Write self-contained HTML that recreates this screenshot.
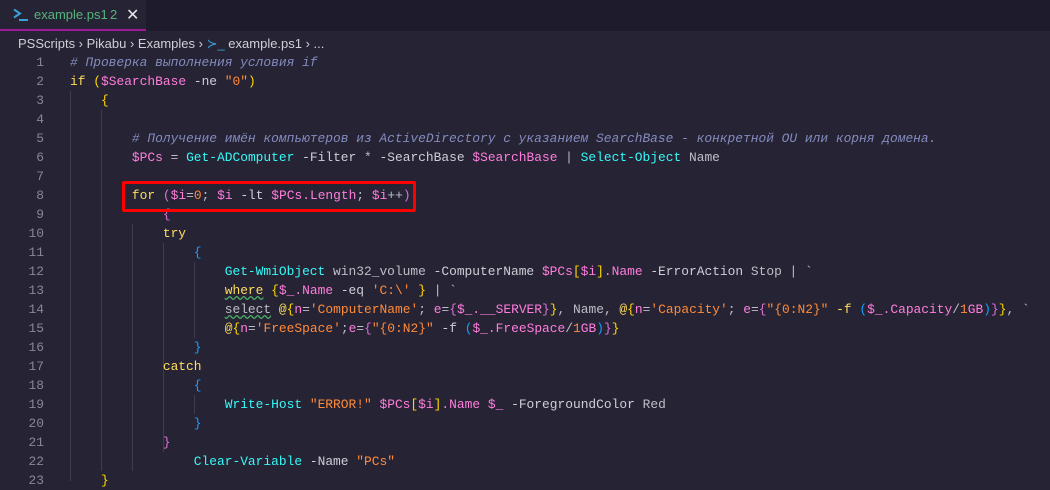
<!DOCTYPE html>
<html><head><meta charset="utf-8"><style>
html,body{margin:0;width:1050px;height:481px;overflow:hidden;background:#262335;font-family:"Liberation Sans",sans-serif}
.tabbar{position:absolute;left:0;top:0;width:1050px;height:31px;background:#1e1b2c}
.tab{position:absolute;left:0;top:0;width:146px;height:29px;background:#262335;border-bottom:2px solid #a0199a}
.tab .t{position:absolute;left:34px;top:7px;font-size:13px;color:#56b47a}
.tab .n{position:absolute;left:110px;top:7px;font-size:13px;color:#56b47a}
.tab .x{position:absolute;left:126px;top:5px;font-size:16px;color:#e6e6e6}
.bc{position:absolute;left:18px;top:36px;font-size:13px;color:#cfcfd6;white-space:pre}
.code{position:absolute;left:0;top:53px;font-family:"Liberation Mono","DejaVu Sans Mono",monospace;font-size:12.9px}
.l{height:19px;line-height:19px;position:relative;white-space:pre;color:#c0bcc6}
.ln{position:absolute;left:0;width:44px;text-align:right;color:#8a8698}
.tx{position:absolute;left:70px}
.c{color:#848bbd;font-style:italic}
.k{color:#fede5d}.v{color:#ff7edb}.s{color:#ff8b39}.f{color:#36f9f6}.p{color:#cfcdd6}
.y{color:#ffd700}.m{color:#da70d6}.b{color:#179fff}
.w{text-decoration:underline wavy #4cae63}
.g{position:absolute;width:1px;background:#3f3c50}
.box{position:absolute;left:122px;top:181px;width:288px;height:25px;border:3px solid #f00;border-radius:2px}
</style></head><body>
<div class="tabbar"><div class="tab">
<svg style="position:absolute;left:13px;top:8px" width="16" height="14" viewBox="0 0 16 14"><path d="M1 1.5 L7 5.5 L1 9.5" stroke="#3aa0d8" stroke-width="2" fill="none"/><path d="M6 12 H15" stroke="#3aa0d8" stroke-width="2"/></svg>
<span class="t">example.ps1</span><span class="n">2</span><span class="x">✕</span></div></div>
<div class="bc">PSScripts › Pikabu › Examples › <span style="color:#3aa0d8">≻_</span> example.ps1 › ...</div>
<div class="g" style="left:70px;top:91px;height:390px"></div>
<div class="g" style="left:101px;top:110px;height:361px"></div>
<div class="g" style="left:132px;top:224px;height:247px"></div>
<div class="g" style="left:163px;top:243px;height:209px"></div>
<div class="g" style="left:194px;top:262px;height:76px"></div>
<div class="g" style="left:194px;top:395px;height:19px"></div>
<div class="code">
<div class="l"><span class="ln">1</span><span class="tx c"># Проверка выполнения условия if</span></div>
<div class="l"><span class="ln">2</span><span class="tx"><span class="k">if</span> <span class="y">(</span><span class="v">$SearchBase</span> <span class="p">-ne</span> <span class="s">"0"</span><span class="y">)</span></span></div>
<div class="l"><span class="ln">3</span><span class="tx">    <span class="y">{</span></span></div>
<div class="l"><span class="ln">4</span></div>
<div class="l"><span class="ln">5</span><span class="tx c">        # Получение имён компьютеров из ActiveDirectory с указанием SearchBase - конкретной OU или корня домена.</span></div>
<div class="l"><span class="ln">6</span><span class="tx">        <span class="v">$PCs</span> = <span class="f">Get-ADComputer</span> <span class="p">-Filter</span> * <span class="p">-SearchBase</span> <span class="v">$SearchBase</span> | <span class="f">Select-Object</span> Name</span></div>
<div class="l"><span class="ln">7</span></div>
<div class="l"><span class="ln">8</span><span class="tx">        <span class="k">for</span> <span class="m">(</span><span class="v">$i</span>=<span class="s">0</span>; <span class="v">$i</span> <span class="p">-lt</span> <span class="v">$PCs.Length</span>; <span class="v">$i</span>++<span class="m">)</span></span></div>
<div class="l"><span class="ln">9</span><span class="tx">            <span class="m">{</span></span></div>
<div class="l"><span class="ln">10</span><span class="tx">            <span class="k">try</span></span></div>
<div class="l"><span class="ln">11</span><span class="tx">                <span class="b">{</span></span></div>
<div class="l"><span class="ln">12</span><span class="tx">                    <span class="f">Get-WmiObject</span> win32_volume <span class="p">-ComputerName</span> <span class="v">$PCs</span><span class="y">[</span><span class="v">$i</span><span class="y">]</span><span class="v">.Name</span> <span class="p">-ErrorAction</span> Stop | `</span></div>
<div class="l"><span class="ln">13</span><span class="tx">                    <span class="k w">where</span> <span class="y">{</span><span class="v">$_.Name</span> <span class="p">-eq</span> <span class="s">'C:\'</span> <span class="y">}</span> | `</span></div>
<div class="l"><span class="ln">14</span><span class="tx">                    <span class="w">select</span> <span class="k">@</span><span class="y">{</span><span class="v">n</span>=<span class="s">'ComputerName'</span>; <span class="v">e</span>=<span class="m">{</span><span class="v">$_.__SERVER</span><span class="m">}</span><span class="y">}</span>, Name, <span class="k">@</span><span class="y">{</span><span class="v">n</span>=<span class="s">'Capacity'</span>; <span class="v">e</span>=<span class="m">{</span><span class="s">"{0:N2}"</span> <span class="k">-f</span> <span class="b">(</span><span class="v">$_.Capacity</span>/<span class="s">1</span><span class="v">GB</span><span class="b">)</span><span class="m">}</span><span class="y">}</span>, `</span></div>
<div class="l"><span class="ln">15</span><span class="tx">                    <span class="k">@</span><span class="y">{</span><span class="v">n</span>=<span class="s">'FreeSpace'</span>;<span class="v">e</span>=<span class="m">{</span><span class="s">"{0:N2}"</span> <span class="p">-f</span> <span class="b">(</span><span class="v">$_.FreeSpace</span>/<span class="s">1</span><span class="v">GB</span><span class="b">)</span><span class="m">}</span><span class="y">}</span></span></div>
<div class="l"><span class="ln">16</span><span class="tx">                <span class="b">}</span></span></div>
<div class="l"><span class="ln">17</span><span class="tx">            <span class="k">catch</span></span></div>
<div class="l"><span class="ln">18</span><span class="tx">                <span class="b">{</span></span></div>
<div class="l"><span class="ln">19</span><span class="tx">                    <span class="f">Write-Host</span> <span class="s">"ERROR!"</span> <span class="v">$PCs</span><span class="y">[</span><span class="v">$i</span><span class="y">]</span><span class="v">.Name</span> <span class="v">$_</span> <span class="p">-ForegroundColor</span> Red</span></div>
<div class="l"><span class="ln">20</span><span class="tx">                <span class="b">}</span></span></div>
<div class="l"><span class="ln">21</span><span class="tx">            <span class="m">}</span></span></div>
<div class="l"><span class="ln">22</span><span class="tx">                <span class="f">Clear-Variable</span> <span class="p">-Name</span> <span class="s">"PCs"</span></span></div>
<div class="l"><span class="ln">23</span><span class="tx">    <span class="y">}</span></span></div>
</div>
<div class="box"></div>
</body></html>
